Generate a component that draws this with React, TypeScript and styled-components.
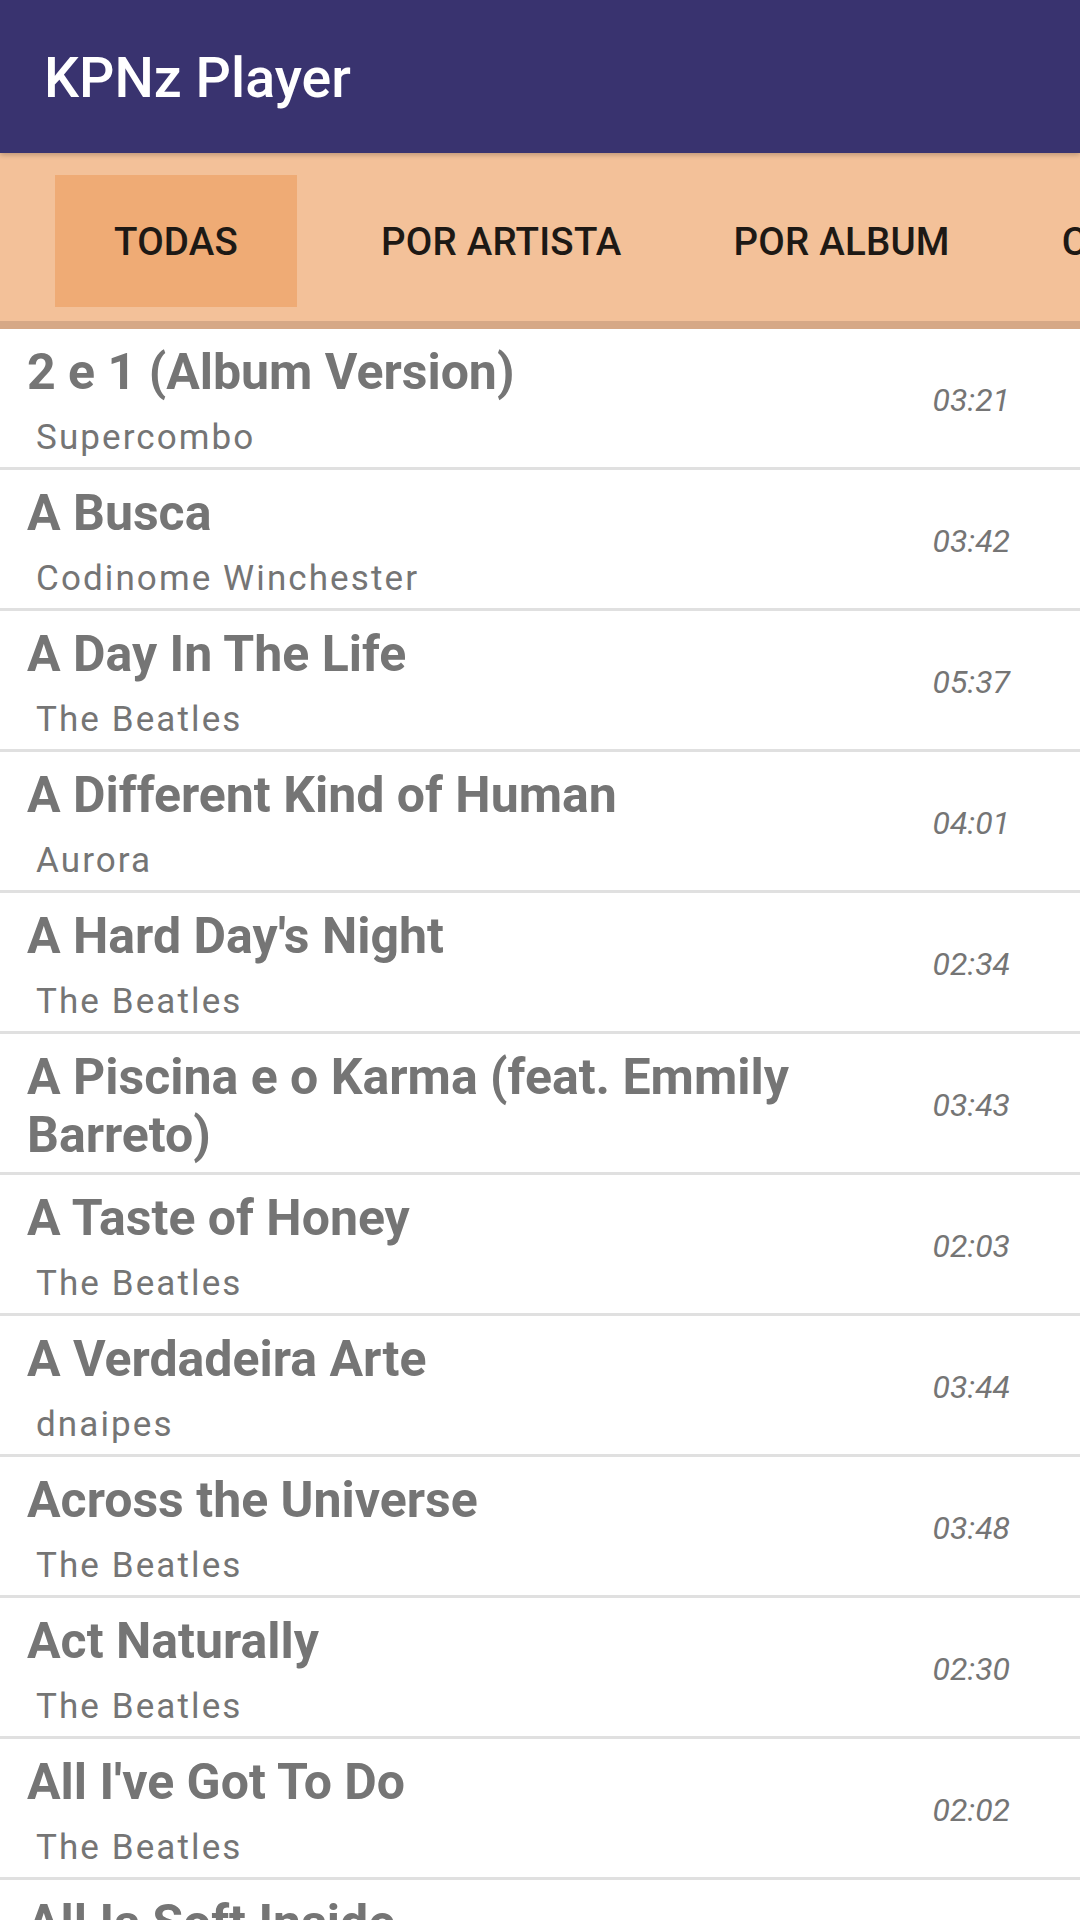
import React from "react";
import styled, { createGlobalStyle } from "styled-components";

const GlobalStyle = createGlobalStyle`
  html, body {
    margin: 0;
    padding: 0;
    background: #ffffff;
  }
  body {
    font-family: Roboto, "Noto Sans", "Liberation Sans", sans-serif;
    -webkit-font-smoothing: antialiased;
  }
  * { box-sizing: border-box; }
`;

const Screen = styled.div`
  width: 1080px;
  height: 1920px;
  overflow: hidden;
  display: flex;
  flex-direction: column;
  background: #ffffff;
`;

const AppBar = styled.header`
  position: relative;
  z-index: 2;
  height: 153px;
  flex: none;
  display: flex;
  align-items: center;
  padding: 4px 0 0 44px;
  background: #39336f;
  box-shadow: 0 2px 5px rgba(0, 0, 0, 0.22);
`;

const AppTitle = styled.h1`
  margin: 0;
  font-family: Roboto, sans-serif;
  font-size: 55.5px;
  font-weight: 500;
  color: #ffffff;
  letter-spacing: 0;
`;

const TabBar = styled.nav`
  position: relative;
  z-index: 1;
  flex: none;
  height: 176px;
  display: flex;
  align-items: flex-start;
  padding: 22px 0 0 55px;
  background: #f3c199;
  border-bottom: 8px solid #d6a886;
  overflow: hidden;
  white-space: nowrap;
`;

const Tab = styled.div<{ $active?: boolean }>`
  flex: none;
  height: 132px;
  display: flex;
  align-items: center;
  justify-content: center;
  padding: ${(p) => (p.$active ? "0 59px" : "0 56px")};
  margin-right: ${(p) => (p.$active ? "28px" : "0")};
  background: ${(p) => (p.$active ? "#efab75" : "transparent")};
  font-family: Roboto, sans-serif;
  font-size: 38.5px;
  font-weight: 500;
  letter-spacing: 0.2px;
  color: #1d1915;
  text-transform: uppercase;
`;

const List = styled.ul`
  list-style: none;
  margin: 0;
  padding: 0;
  flex: 1;
  overflow: hidden;
`;

const Row = styled.li`
  height: 141px;
  flex: none;
  display: flex;
  align-items: center;
  gap: 30px;
  padding: 0 70px 0 27px;
  border-bottom: 3px solid #e0e0e0;
  overflow: hidden;
`;

const TextCol = styled.div`
  flex: 1;
  min-width: 0;
  align-self: flex-start;
  padding-top: 14px;
  height: 138px;
  overflow: hidden;
`;

const SongTitle = styled.div`
  font-family: Roboto, sans-serif;
  font-size: 50px;
  line-height: 58px;
  font-weight: 700;
  color: #757575;
`;

const Artist = styled.div`
  margin-top: 14px;
  padding-left: 9px;
  font-family: Roboto, sans-serif;
  font-size: 35px;
  line-height: 46px;
  font-weight: 400;
  letter-spacing: 2.1px;
  color: #757575;
  white-space: nowrap;
`;

const Duration = styled.div`
  flex: none;
  padding-top: 4px;
  font-family: Roboto, sans-serif;
  font-size: 32px;
  font-style: italic;
  color: #757575;
`;

const tabs = ["Todas", "Por Artista", "Por Album", "Compositor"];

const songs = [
  { title: "2 e 1 (Album Version)", artist: "Supercombo", time: "03:21" },
  { title: "A Busca", artist: "Codinome Winchester", time: "03:42" },
  { title: "A Day In The Life", artist: "The Beatles", time: "05:37" },
  { title: "A Different Kind of Human", artist: "Aurora", time: "04:01" },
  { title: "A Hard Day's Night", artist: "The Beatles", time: "02:34" },
  { title: "A Piscina e o Karma (feat. Emmily Barreto)", artist: "Supercombo", time: "03:43" },
  { title: "A Taste of Honey", artist: "The Beatles", time: "02:03" },
  { title: "A Verdadeira Arte", artist: "dnaipes", time: "03:44" },
  { title: "Across the Universe", artist: "The Beatles", time: "03:48" },
  { title: "Act Naturally", artist: "The Beatles", time: "02:30" },
  { title: "All I've Got To Do", artist: "The Beatles", time: "02:02" },
  { title: "All Is Soft Inside", artist: "Aurora", time: "04:34" },
];

export default function App() {
  return (
    <Screen>
      <GlobalStyle />
      <AppBar>
        <AppTitle>KPNz Player</AppTitle>
      </AppBar>
      <TabBar>
        {tabs.map((t, i) => (
          <Tab key={t} $active={i === 0}>
            {t}
          </Tab>
        ))}
      </TabBar>
      <List>
        {songs.map((s) => (
          <Row key={s.title}>
            <TextCol>
              <SongTitle>{s.title}</SongTitle>
              <Artist>{s.artist}</Artist>
            </TextCol>
            <Duration>{s.time}</Duration>
          </Row>
        ))}
      </List>
    </Screen>
  );
}
